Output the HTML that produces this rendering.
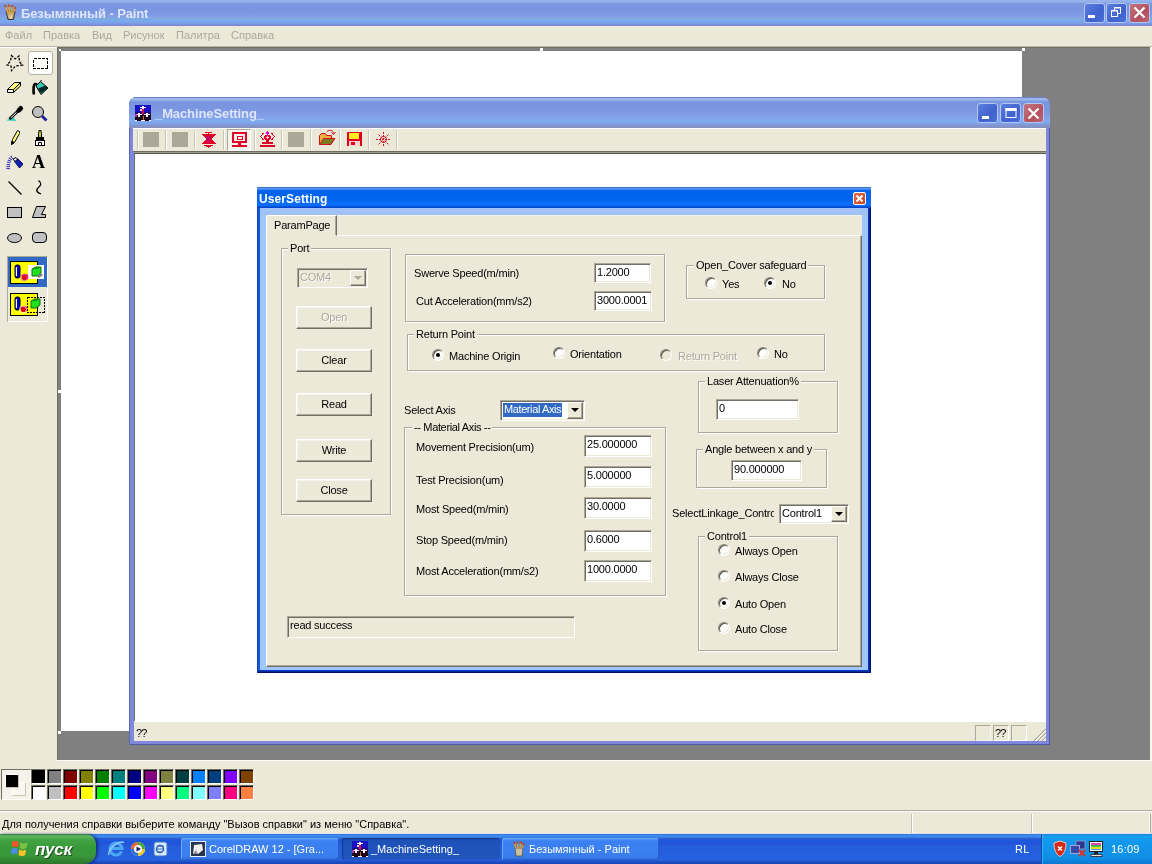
<!DOCTYPE html>
<html><head><meta charset="utf-8"><title>Paint</title>
<style>
*{box-sizing:border-box;margin:0;padding:0}
html,body{width:1152px;height:864px;overflow:hidden;background:#ECE9D8;font-family:"Liberation Sans",sans-serif;font-size:11px;color:#000}
.a{position:absolute}
.t{position:absolute;white-space:nowrap;line-height:13px}
.dl .t,.dl .ed,.dl .bt{letter-spacing:-0.2px}
/* paint window */
#ptitle{left:0;top:0;width:1152px;height:26px;background:linear-gradient(#97B5EC 0,#93B0EB 2px,#7E9CE0 3.5px,#7995DF 6px,#7B97E2 12px,#839FE9 17px,#7FAADC 18.5px,#7AA9F3 21px,#7CA0E6 23px,#7C8ED4 25px,#7A86CB 26px)}
#pmenu{left:0;top:26px;width:1152px;height:20px;background:#ECE9D8}
.mi{position:absolute;top:29px;color:#ACA899;font-size:11px;line-height:13px}
.tb{position:absolute;width:21px;height:20px;border:1px solid #B4C6F2;border-radius:3px;top:3px}
.tbb{background:linear-gradient(135deg,#5E7FDE,#3F62CF 60%,#4A70DA)}
.tbr{background:linear-gradient(135deg,#C27680,#B4525E 60%,#BD6370)}
#gray{left:57px;top:47px;width:1093px;height:713px;background:#808080;border-left:1px solid #6E7062;border-top:1px solid #6E7062}
#canvas{left:61px;top:51px;width:961px;height:680px;background:#fff}

.ed{border:1px solid;border-color:#ACA899 #fff #fff #ACA899;box-shadow:inset 1px 1px 0 #716F64, inset -1px -1px 0 #ECE9D8;overflow:hidden;white-space:nowrap}
.ed span{position:absolute;left:2px;top:2px;line-height:13px}
.ed span.sel{background:#316AC5;color:#fff;left:2px;top:2px;height:14px;padding:0 1px;line-height:13px;letter-spacing:-0.4px}
.cb{position:absolute;right:1px;top:1px;bottom:1px;width:16px;background:#ECE9D8;border:1px solid;border-color:#fff #716F64 #716F64 #fff;box-shadow:inset -1px -1px 0 #ACA899}
.ar{position:absolute;right:5px;top:7px;width:0;height:0;border:4px solid transparent;border-top:4px solid #000;border-bottom:0}
.bt{background:#ECE9D8;border:1px solid;border-color:#fff #716F64 #716F64 #fff;box-shadow:inset -1px -1px 0 #ACA899,inset 1px 1px 0 #F5F4EE;text-align:center}
.bt.dis{color:#ACA899;text-shadow:1px 1px 0 #fff}
.rd{width:12px;height:12px;border-radius:50%;background:#fff;border:1px solid;border-color:#8A8878 #fff #fff #8A8878;box-shadow:inset 1px 1px 0 #55534A,inset -1px -1px 0 #ECE9D8}
.rd.on::after{content:"";position:absolute;left:3px;top:3px;width:4px;height:4px;border-radius:50%;background:#000}
.rdd{background:#ECE9D8}

.pc{width:15px;height:15px;border:1px solid;border-color:#716F64 #fff #fff #716F64;box-shadow:inset 1px 1px 0 #000}
</style></head><body><div id="w" style="position:absolute;left:0;top:0;width:1152px;height:864px;will-change:transform">
<!-- PAINT TITLE -->
<div class="a" id="ptitle"></div>
<div class="t" style="left:21px;top:6px;font:bold 13px/16px 'Liberation Sans',sans-serif;color:#DCE6FA;letter-spacing:-0.12px">Безымянный - Paint</div>
<svg class="a" style="left:3px;top:3px" width="14" height="18" viewBox="0 0 14 18"><path d="M3,8 L12,8 L10.500,16.500 L5,16.500 Z" fill="#C8A860" stroke="#30384C" stroke-width="1"/><path d="M4.500,9 L2,2 M6.500,9 L6,1.500 M8.500,9 L9.500,2 M10.500,9 L12.500,4" stroke="#E0A030" stroke-width="1.700"/><path d="M2,2 l0.700,2.200 M6,1.500 l0.100,2.200 M9.500,2 l-0.300,2.200 M12.500,4 l-0.700,1.800" stroke="#B84820" stroke-width="1.800"/><path d="M6,12 L8,16 M9,11 L8,16" stroke="#F0E0B0" stroke-width="1"/></svg>
<div class="tb tbb" style="left:1084px"></div>
<div class="tb tbb" style="left:1106px"></div>
<div class="tb tbr" style="left:1129px"></div>
<svg class="a" style="left:1084px;top:3px" width="66" height="20" viewBox="1084 3 66 20">
<rect x="1088" y="15" width="7" height="3" fill="#fff"/>
<path d="M1114.500,10 V7.500 H1120.500 V13.500 H1118" fill="none" stroke="#fff" stroke-width="1"/><path d="M1114,7 h7 v1.500 h-7z" fill="#fff"/>
<rect x="1111.500" y="10.500" width="6" height="6" fill="none" stroke="#fff" stroke-width="1"/><path d="M1111,10 h7 v1.500 h-7z" fill="#fff"/>
<path d="M1134.500,7.500 L1144.500,17.500 M1144.500,7.500 L1134.500,17.500" stroke="#fff" stroke-width="2.200"/>
</svg>
<div class="a" style="left:1150px;top:47px;width:2px;height:714px;background:#F8F7F0"></div><div class="a" style="left:57px;top:760px;width:1095px;height:1px;background:#FAF9F4"></div>
<div class="a" id="pmenu"></div>
<span class="mi" style="left:5px">Файл</span>
<span class="mi" style="left:43px">Правка</span>
<span class="mi" style="left:92px">Вид</span>
<span class="mi" style="left:123px">Рисунок</span>
<span class="mi" style="left:176px">Палитра</span>
<span class="mi" style="left:231px">Справка</span>
<div class="a" style="left:0;top:46px;width:1152px;height:1px;background:#BAB7A6"></div><div class="a" style="left:0;top:47px;width:57px;height:1px;background:#fff"></div>
<div class="a" id="gray"></div>
<div class="a" id="canvas"></div>
<div class="a" style="left:59px;top:49px;width:2px;height:2px;background:#fff"></div><div class="a" style="left:540px;top:48px;width:3px;height:3px;background:#fff"></div><div class="a" style="left:1022px;top:48px;width:3px;height:3px;background:#fff"></div><div class="a" style="left:58px;top:390px;width:3px;height:3px;background:#fff"></div><div class="a" style="left:58px;top:731px;width:3px;height:3px;background:#fff"></div>
<!--TOOLBOX-->
<!-- toolbox -->
<div class="a" style="left:28px;top:51px;width:25px;height:24px;background:#FDFDFB;border:1px solid #B4B1A2;border-radius:3px"></div>
<svg class="a" style="left:0;top:47px" width="57" height="280" viewBox="0 47 57 280">
<g fill="none" stroke="#000" stroke-width="1">
<!-- free select star -->
<path d="M11.500,55.500 L15,59 L19,56 L19.500,62 L22.500,65 L15.500,66 L11.500,70.500 L11,66 L7,65 L10.500,61 Z" stroke-dasharray="2.500 1.500" stroke-width="1.300"/>
<!-- rect select -->
<rect x="33.500" y="58.500" width="14" height="10" stroke-dasharray="3 1" stroke-width="1.150" shape-rendering="crispEdges"/>
<!-- eraser -->
<path d="M7.500,89.500 L14.500,82.500 L20.500,82.500 L13.500,89.500 Z" fill="#FFFF80"/>
<path d="M13.500,89.500 L20.500,82.500 L20.500,86 L13.500,92.500 Z" fill="#E0E060"/>
<path d="M7.500,89.500 L13.500,89.500 L13.500,92.500 L7.500,92.500 Z" fill="#F4F4F4"/>
<!-- fill bucket -->
<path d="M40.500,81.500 L48,88 L41,94.500 L36,86 Z" fill="#38C8B8"/>
<path d="M38,88.500 L45.500,85.500 L47.500,88 L42,93 L40,92 Z" fill="#002828" stroke="none"/>
<path d="M37,84.500 C34,82.500 33,86 33.800,94.500" stroke-width="2.600"/>
<path d="M40.500,81.500 L41.500,80"/>
<!-- eyedropper -->
<path d="M6.500,120.500 L16,121 L13.500,117 L10,117.500 Z" fill="#30D0C0" stroke="none"/>
<path d="M9.500,119 L18.500,110.500" stroke-width="2.800"/>
<path d="M10.800,117.800 L16.500,112.400" stroke="#fff" stroke-width="1"/>
<path d="M18.800,110.300 L20.800,108.300" stroke-width="4.600" stroke-linecap="round"/>
<!-- magnifier -->
<circle cx="38" cy="112" r="5.500" fill="#C0C0C0"/>
<path d="M42,116 L46.500,120.500" stroke="#2020A0" stroke-width="3"/>
<!-- pencil -->
<path d="M11.500,144.500 L12.500,139.500 L17.500,130.500 L19.500,131.500 L19.500,133.500 L14.500,142.500 Z" fill="#FFFF80"/>
<path d="M11.500,144.500 L12,141 L14,142.500 Z" fill="#000"/>
<!-- brush -->
<path d="M38.500,137.500 L38.500,133.500 L39,130.500 L41,130.500 L41.500,133.500 L41.500,137.500 Z" fill="#C8C840"/>
<rect x="36.500" y="137.500" width="7" height="2.500" fill="#000"/>
<rect x="35.500" y="140.500" width="9" height="5" fill="#fff"/>
<path d="M38.500,142.500 V145 M41.500,142.500 V145 M38.500,142.500 H41.500"/>
<!-- airbrush -->
<path d="M14.500,161.500 L17.500,158.500 L23,164 L19.500,168 Z" fill="#1020B0" stroke="#101060"/>
<path d="M13,159 L16,157.500 L17.500,159 L15,161.500 Z" fill="#fff"/>
<path d="M8,169 C8.500,162 9.500,158.500 12.500,157" stroke="#3030C0" stroke-width="3.600" stroke-dasharray="1 1"/>
<!-- line -->
<path d="M8.500,181.500 L21.500,194.500" stroke-width="1.300"/>
<!-- curve -->
<path d="M38.500,180.500 C43,184 40,186 38,188 C35,191 38,193 41,194" stroke-width="1.300"/>
<!-- rect -->
<rect x="7.500" y="207.500" width="14" height="10" fill="#C0C0C0"/>
<!-- polygon -->
<path d="M36.500,206.500 L45.500,206.500 L41.500,214.500 L45.500,214.500 L45.500,217.500 L32.500,217.500 Z" fill="#C0C0C0"/>
<!-- ellipse -->
<ellipse cx="14.500" cy="238" rx="7" ry="4.500" fill="#C0C0C0"/>
<!-- rrect -->
<rect x="32.500" y="232.500" width="14" height="10" rx="3.500" fill="#C0C0C0"/>
</g>
<text x="32" y="168" font-family="Liberation Serif,serif" font-weight="bold" font-size="18" fill="#000">A</text>
</svg>
<!-- tool options -->
<div class="a" style="left:7px;top:256px;width:41px;height:66px;border:1px solid;border-color:#ACA899 #fff #fff #ACA899;background:#ECE9D8"></div>
<div class="a" style="left:8px;top:257px;width:39px;height:30px;background:#316AC5"></div>
<svg class="a" style="left:8px;top:257px" width="39" height="64" viewBox="0 0 39 64">
<g shape-rendering="crispEdges">
<rect x="2.500" y="4.500" width="27" height="22" fill="#FFFF00" stroke="#000"/>
<rect x="20" y="8" width="16" height="14" fill="#fff"/>
<rect x="2.500" y="36.500" width="27" height="22" fill="#FFFF00" stroke="#000"/>
<rect x="19.500" y="40.500" width="17" height="15" fill="none" stroke="#000" stroke-dasharray="2 1"/>
</g>
<g>
<rect x="7" y="8" width="5" height="13" rx="2" fill="#0000D0" stroke="#000"/>
<rect x="7.800" y="10" width="1.200" height="9" fill="#fff"/>
<circle cx="17" cy="20" r="3.300" fill="#E00030"/>
<circle cx="16" cy="20.500" r="3.300" fill="none" stroke="#E060C0" stroke-width="0.800"/>
<path d="M24,12 L28,10 L33,10 L33,16 L29,19 L24,19 Z" fill="#20E020" stroke="#107010"/>
<path d="M24,12 L28,10 L33,10 L29,12 Z" fill="#109010"/>
<path d="M29,19 L33,16 L35,18 L31,21 Z" fill="#808080"/>
<rect x="7" y="40" width="5" height="13" rx="2" fill="#0000D0" stroke="#000"/>
<rect x="7.800" y="42" width="1.200" height="9" fill="#fff"/>
<circle cx="16" cy="52" r="3.300" fill="#E00010"/>
<circle cx="15" cy="52.500" r="3.500" fill="none" stroke="#fff" stroke-width="0.800"/>
<path d="M23,44 L27,42 L32,42 L32,48 L28,51 L23,51 Z" fill="#20E020" stroke="#107010"/>
<path d="M23,44 L27,42 L32,42 L28,44 Z" fill="#109010"/>
</g>
</svg>
<!--/TOOLBOX-->
<!--MSWIN-->
<!-- MachineSetting window -->
<div class="a" style="left:129px;top:97px;width:921px;height:648px;background:#8088DC;border-radius:8px 8px 0 0;box-shadow:inset 1px 0 0 #5868A8,inset -1px -1px 0 #5058A8"></div>
<div class="a" style="left:129px;top:97px;width:921px;height:31px;border-radius:8px 8px 0 0;background:linear-gradient(#6C83C8 0,#6C83C8 1px,#9DB7EC 1px,#9AB4EB 3px,#809CE2 4px,#7995DF 6px,#7B97E1 13px,#83A0E8 20px,#7FACF2 24px,#7CA0E6 27px,#8496CC 28.5px,#8290BE 31px)"></div>
<svg class="a" style="left:135px;top:105px" width="16" height="16" viewBox="0 0 16 16" shape-rendering="crispEdges">
<rect width="16" height="9" fill="#1A12C0"/><rect y="9" width="16" height="7" fill="#1C0418"/><rect y="7" width="16" height="3" fill="#2A0860" opacity="0.7"/>
<path d="M5,2h6v1.400h-6z M7,1h2v3.300h-2z M1,9h6v1.400h-6z M3,8h2v3.500h-2z M9,9h6v1.400h-6z M11,8h2v3.500h-2z M0,15h2v1h-2z M6,15h4v1h-4z M14,15h2v1h-2z" fill="#FFF0FF"/>
<path d="M5,4h1.500v2h-1.500z" fill="#F0D8C0"/>
<path d="M7,4.300h1.500v5h-1.500z" fill="#D01058"/><path d="M7.500,11h1.200v3.500h-1.200z" fill="#C06818"/><path d="M0,9h1.500v3h-1.500z" fill="#C040D0" opacity="0.8"/>
</svg>
<div class="t" style="left:155px;top:106px;font:bold 13px/16px 'Liberation Sans',sans-serif;color:#DCE6FA;letter-spacing:-0.1px">_MachineSetting_</div>
<div class="tb tbb" style="left:977px;top:103px"></div>
<div class="tb tbb" style="left:1000px;top:103px"></div>
<div class="tb tbr" style="left:1023px;top:103px"></div>
<svg class="a" style="left:977px;top:103px" width="70" height="21" viewBox="0 0 70 21">
<rect x="5" y="13" width="7" height="3" fill="#fff"/>
<rect x="29" y="5.500" width="10" height="9" fill="none" stroke="#fff" stroke-width="1"/><rect x="28.500" y="5" width="11" height="3" fill="#fff"/>
<path d="M51.500,5.500 L61.500,15.500 M61.500,5.500 L51.500,15.500" stroke="#fff" stroke-width="2.200"/>
</svg>
<!-- toolbar -->
<div class="a" style="left:133px;top:128px;width:913px;height:24px;background:#ECE9D8;border-top:1px solid #fff;border-bottom:1px solid #6E6C60"></div>
<div class="a" style="left:134px;top:152px;width:912px;height:1px;background:#A09D8C"></div>
<div class="a" style="left:134px;top:153px;width:912px;height:568px;background:#fff;border-left:1px solid #687070;border-top:1px solid #55534A"></div>
<div class="a" style="left:227px;top:129px;width:24px;height:22px;background:#F5F4EC;border:1px solid;border-color:#ACA899 #fff #fff #ACA899"></div>
<svg class="a" style="left:134px;top:128px" width="300" height="24" viewBox="134 128 300 24">
<g shape-rendering="crispEdges">
<g fill="#ACA899"><rect x="143" y="132" width="16" height="15"/><rect x="172" y="132" width="16" height="15"/><rect x="288" y="132" width="16" height="15"/></g>
<g stroke="#C9C6B8" stroke-width="1"><path d="M137.500,130 V150 M165.500,130 V150 M194.500,130 V150 M223.500,130 V150 M254.500,130 V150 M281.500,130 V150 M310.500,130 V150 M339.500,130 V150 M368.500,130 V150 M396.500,130 V150"/></g>
<g stroke="#fff" stroke-width="1"><path d="M138.500,130 V150 M166.500,130 V150 M195.500,130 V150 M224.500,130 V150 M255.500,130 V150 M282.500,130 V150 M311.500,130 V150 M340.500,130 V150 M369.500,130 V150 M397.500,130 V150"/></g>
<!-- icon3 bowtie -->
<path d="M201,134 L216,134 L211,139 L216,144 L201,144 L206,139 Z M205,132 h7 v1 h-7z M208,133 h1 v2 h-1z M204,145 h9 v1 h-9z M206,146 h5 v1 h-5z M208,147 h1 v1 h-1z" fill="#E00028"/>
<path d="M207,136 h1 v6 h-1z M209,136 h1 v6 h-1z" fill="#A000A0"/>
<!-- icon4 monitor -->
<path d="M232,132 h15 v11 h-15z M234,134 v7 h11 v-7z" fill="#E00028" fill-rule="evenodd"/>
<path d="M234,134 h11 v7 h-11z" fill="#FBEFF0"/>
<path d="M237,136 h6 v4 h-6z M238,137 v2 h4 v-2z" fill="#E00028" fill-rule="evenodd"/>
<path d="M238,143 h3 v2 h-3z M232,145 h15 v2 h-15z" fill="#E00028"/>
<!-- icon5 -->
<path d="M265,135 h5 v5 h-5z M264,136 h7 v3 h-7z M266,140 h3 v3 h-3z M262,142 h11 v2 h-11z M260,145 h15 v2 h-15z" fill="#E00028"/>
<path d="M267,131 h1 v1 h-1z M266,132 h3 v2 h-3z M267,134 h1 v2 h-1z" fill="#D000D0"/>
<path d="M266,137 h3 v1 h-3z M267,136 h1 v3 h-1z" fill="#FBD0E0"/>
<path d="M263.500,133 L260.500,136.500 L263.500,140 M271.500,133 L274.500,136.500 L271.500,140" fill="none" stroke="#E00028"/>
</g>
<!-- open folder -->
<path d="M319.500,144.500 L319.500,135.500 L321.500,133.500 L325.500,133.500 L326.500,135.500 L331.500,135.500 L331.500,138.500" fill="#F0B040" stroke="#D01020"/>
<path d="M319.500,144.500 L323.500,138.500 L335,138.500 L331,144.500 Z" fill="#7A7A20" stroke="#D01020"/>
<path d="M327,131.500 C330,129.500 333,130 333.500,133.500 M331.500,132.500 L333.500,134.500 L335.500,132" fill="none" stroke="#D01020"/>
<!-- floppy -->
<g shape-rendering="crispEdges">
<rect x="347" y="132" width="15" height="14" fill="#E00020"/>
<rect x="349" y="133" width="10" height="6" fill="#FFEE20"/>
<rect x="349" y="141" width="11" height="5" fill="#F4D8D0"/>
<rect x="351" y="142" width="4" height="3" fill="#E00020"/>
</g>
<!-- starburst -->
<g stroke="#D01020" stroke-width="1" fill="none">
<path d="M383.500,132 V147 M376,139.500 H391 M378.500,134.500 L388.500,144.500 M388.500,134.500 L378.500,144.500" stroke-dasharray="2 1"/>
<circle cx="383.500" cy="139.500" r="3"/>
</g>
</svg>
<!-- ms status bar -->
<div class="a" style="left:134px;top:721px;width:912px;height:20px;background:#ECE9D8;border-top:1px solid #fff"></div>
<div class="t" style="left:136px;top:727px;font-size:11px;letter-spacing:-0.8px">??</div>
<div class="a" style="left:975px;top:725px;width:16px;height:16px;border:1px solid;border-color:#ACA899 #F6F5EE #F6F5EE #ACA899"></div>
<div class="a" style="left:993px;top:725px;width:16px;height:16px;border:1px solid;border-color:#ACA899 #fff #fff #ACA899"></div>
<div class="a" style="left:1011px;top:725px;width:16px;height:16px;border:1px solid;border-color:#ACA899 #fff #fff #ACA899"></div>
<div class="t" style="left:995px;top:727px;font-size:11px;letter-spacing:-0.8px">??</div>
<svg class="a" style="left:1033px;top:728px" width="13" height="13" viewBox="0 0 13 13"><path d="M1,13 L13,1 M5,13 L13,5 M9,13 L13,9" stroke="#ACA899" stroke-width="1.300"/><path d="M2,13 L13,2 M6,13 L13,6 M10,13 L13,10" stroke="#fff" stroke-width="0.800"/></svg>
<!--/MSWIN-->
<!--DIALOG-->
<!-- UserSetting dialog -->
<div class="dl">
<div class="a" style="left:257px;top:187px;width:614px;height:486px;background:#0A3CC0;box-shadow:inset 1px 0 0 #1038A8,inset -1px -1px 0 #001068,inset -2px -2px 0 #0428A0"></div>
<div class="a" style="left:257px;top:187px;width:614px;height:21px;background:linear-gradient(#3A6CC8 0,#3A6CC8 1px,#5A9AF8 1px,#5A9AF8 2px,#1068F0 3px,#0062EC 5px,#0065EE 13px,#0A6CF8 16px,#0A6CF8 18.5px,#0055DC 19.5px,#003FC4 21px)"></div>
<div class="a" style="left:260px;top:208px;width:608px;height:462px;background:linear-gradient(#A2C4FB 0,#9FC2F5 5px,#A6C2E6 7px,#A0C7FB 8px)"></div>
<div class="a" style="left:258px;top:208px;width:2px;height:462px;background:linear-gradient(90deg,#1C62E0 50%,#0A58D0 50%)"></div>
<div class="a" style="left:868px;top:208px;width:1px;height:462px;background:#0A30B0"></div>
<div class="t" style="left:259px;top:192px;font:bold 12px/14px 'Liberation Sans',sans-serif;color:#fff;letter-spacing:0.1px">UserSetting</div>
<div class="a" style="left:853px;top:192px;width:13px;height:13px;background:linear-gradient(135deg,#E0704E,#C8401E);border:1px solid #fff;border-radius:2px"></div>
<svg class="a" style="left:853px;top:192px" width="13" height="13" viewBox="0 0 13 13"><path d="M3.500,3.500 L9.500,9.500 M9.500,3.500 L3.500,9.500" stroke="#fff" stroke-width="2"/></svg>
<div class="a" style="left:266px;top:235px;width:596px;height:432px;background:#ECE9D8;border:1px solid;border-color:#fff #716F64 #716F64 #fff;box-shadow:inset -1px -1px 0 #ACA899"></div>
<div class="a" style="left:266px;top:215px;width:71px;height:21px;background:#ECE9D8;border:1px solid;border-color:#fff #716F64 #ECE9D8 #fff;border-radius:2px 2px 0 0;box-shadow:inset -1px 0 0 #ACA899"></div>
<div class="a" style="left:337px;top:215px;width:525px;height:20px;background:#ECE9D8"></div>
<div class="a tabtopline" style="left:337px;top:215px;width:525px;height:1px;background:#EEF3F1"></div>
<div class="t" style="left:274px;top:219px">ParamPage</div>
<div class="a" style="left:281px;top:248px;width:110px;height:267px;border:1px solid #ACA899;box-shadow:1px 1px 0 #fff, inset 1px 1px 0 #fff"></div>
<div class="t" style="left:288px;top:242px;background:#ECE9D8;padding:0 2px;">Port</div>
<div class="a ed" style="left:297px;top:268px;width:71px;height:20px;background:#ECE9D8"><span class="" style="color:#ACA899;text-shadow:1px 1px 0 #fff">COM4</span><i class="cb"></i><b class="ar" style="border-top-color:#ACA899"></b></div>
<div class="a bt dis" style="left:296px;top:306px;width:76px;height:23px;line-height:21px">Open</div>
<div class="a bt" style="left:296px;top:349px;width:76px;height:23px;line-height:21px">Clear</div>
<div class="a bt" style="left:296px;top:393px;width:76px;height:23px;line-height:21px">Read</div>
<div class="a bt" style="left:296px;top:439px;width:76px;height:23px;line-height:21px">Write</div>
<div class="a bt" style="left:296px;top:479px;width:76px;height:23px;line-height:21px">Close</div>
<div class="a" style="left:405px;top:254px;width:260px;height:68px;border:1px solid #ACA899;box-shadow:1px 1px 0 #fff, inset 1px 1px 0 #fff"></div>
<div class="t" style="left:414px;top:267px;">Swerve Speed(m/min)</div>
<div class="t" style="left:416px;top:295px;">Cut Acceleration(mm/s2)</div>
<div class="a ed" style="left:594px;top:263px;width:57px;height:20px;background:#fff"><span>1.2000</span></div>
<div class="a ed" style="left:594px;top:291px;width:58px;height:20px;background:#fff"><span>3000.0001</span></div>
<div class="a" style="left:686px;top:265px;width:139px;height:34px;border:1px solid #ACA899;box-shadow:1px 1px 0 #fff, inset 1px 1px 0 #fff"></div>
<div class="t" style="left:694px;top:259px;background:#ECE9D8;padding:0 2px;">Open_Cover safeguard</div>
<div class="a rd" style="left:705px;top:277px"></div>
<div class="t" style="left:722px;top:278px;">Yes</div>
<div class="a rd on" style="left:764px;top:277px"></div>
<div class="t" style="left:782px;top:278px;">No</div>
<div class="a" style="left:407px;top:334px;width:418px;height:37px;border:1px solid #ACA899;box-shadow:1px 1px 0 #fff, inset 1px 1px 0 #fff"></div>
<div class="t" style="left:414px;top:328px;background:#ECE9D8;padding:0 2px;">Return Point</div>
<div class="a rd on" style="left:432px;top:349px"></div>
<div class="t" style="left:449px;top:350px;">Machine Origin</div>
<div class="a rd" style="left:553px;top:347px"></div>
<div class="t" style="left:570px;top:348px;">Orientation</div>
<div class="a rd rdd" style="left:660px;top:349px"></div>
<div class="t" style="left:678px;top:350px;color:#ACA899;text-shadow:1px 1px 0 #fff;">Return Point</div>
<div class="a rd" style="left:757px;top:347px"></div>
<div class="t" style="left:774px;top:348px;">No</div>
<div class="a" style="left:698px;top:381px;width:140px;height:52px;border:1px solid #ACA899;box-shadow:1px 1px 0 #fff, inset 1px 1px 0 #fff"></div>
<div class="t" style="left:705px;top:375px;background:#ECE9D8;padding:0 2px;">Laser Attenuation%</div>
<div class="a ed" style="left:716px;top:399px;width:83px;height:21px;background:#fff"><span>0</span></div>
<div class="t" style="left:404px;top:404px;">Select Axis</div>
<div class="a ed" style="left:500px;top:400px;width:85px;height:21px;background:#fff"><span class="sel" style="">Material Axis</span><i class="cb"></i><b class="ar" style=""></b></div>
<div class="a" style="left:404px;top:427px;width:262px;height:169px;border:1px solid #ACA899;box-shadow:1px 1px 0 #fff, inset 1px 1px 0 #fff"></div>
<div class="t" style="left:412px;top:421px;background:#ECE9D8;padding:0 2px;letter-spacing:-0.35px;">-- Material Axis --</div>
<div class="t" style="left:416px;top:441px;">Movement Precision(um)</div>
<div class="t" style="left:416px;top:474px;">Test Precision(um)</div>
<div class="t" style="left:416px;top:503px;">Most Speed(m/min)</div>
<div class="t" style="left:416px;top:534px;">Stop Speed(m/min)</div>
<div class="t" style="left:416px;top:565px;">Most Acceleration(mm/s2)</div>
<div class="a ed" style="left:584px;top:435px;width:68px;height:22px;background:#fff"><span>25.000000</span></div>
<div class="a ed" style="left:584px;top:466px;width:68px;height:22px;background:#fff"><span>5.000000</span></div>
<div class="a ed" style="left:584px;top:497px;width:68px;height:22px;background:#fff"><span>30.0000</span></div>
<div class="a ed" style="left:584px;top:530px;width:68px;height:22px;background:#fff"><span>0.6000</span></div>
<div class="a ed" style="left:584px;top:560px;width:68px;height:22px;background:#fff"><span>1000.0000</span></div>
<div class="a" style="left:696px;top:449px;width:131px;height:39px;border:1px solid #ACA899;box-shadow:1px 1px 0 #fff, inset 1px 1px 0 #fff"></div>
<div class="t" style="left:703px;top:443px;background:#ECE9D8;padding:0 2px;">Angle between x and y</div>
<div class="a ed" style="left:731px;top:460px;width:71px;height:21px;background:#fff"><span>90.000000</span></div>
<div class="t" style="left:672px;top:507px;width:102px;overflow:hidden">SelectLinkage_Control</div>
<div class="a ed" style="left:779px;top:504px;width:70px;height:20px;background:#fff"><span class="" style="">Control1</span><i class="cb"></i><b class="ar" style=""></b></div>
<div class="a" style="left:698px;top:536px;width:140px;height:115px;border:1px solid #ACA899;box-shadow:1px 1px 0 #fff, inset 1px 1px 0 #fff"></div>
<div class="t" style="left:705px;top:530px;background:#ECE9D8;padding:0 2px;">Control1</div>
<div class="a rd" style="left:718px;top:544px"></div>
<div class="t" style="left:735px;top:545px;">Always Open</div>
<div class="a rd" style="left:718px;top:570px"></div>
<div class="t" style="left:735px;top:571px;">Always Close</div>
<div class="a rd on" style="left:718px;top:597px"></div>
<div class="t" style="left:735px;top:598px;">Auto Open</div>
<div class="a rd" style="left:718px;top:622px"></div>
<div class="t" style="left:735px;top:623px;">Auto Close</div>
<div class="a ed" style="left:287px;top:616px;width:288px;height:22px;background:#ECE9D8"><span>read success</span></div>
</div>
<!--/DIALOG-->
<!--BOTTOM-->
<!-- palette -->
<div class="a" style="left:1px;top:769px;width:30px;height:31px;border:1px solid;border-color:#716F64 #fff #fff #716F64;background:#F4F3EA"></div>
<div class="a" style="left:12px;top:782px;width:14px;height:14px;background:#F8F7F0;border:1px solid;border-color:#fff #C8C5B8 #C8C5B8 #fff"></div>
<div class="a" style="left:5px;top:774px;width:14px;height:14px;background:#000;border:1px solid;border-color:#fff #C8C5B8 #C8C5B8 #fff"></div>
<div class="a pc" style="left:31px;top:769px;background:#000000"></div>
<div class="a pc" style="left:47px;top:769px;background:#808080"></div>
<div class="a pc" style="left:63px;top:769px;background:#800000"></div>
<div class="a pc" style="left:79px;top:769px;background:#808000"></div>
<div class="a pc" style="left:95px;top:769px;background:#008000"></div>
<div class="a pc" style="left:111px;top:769px;background:#008080"></div>
<div class="a pc" style="left:127px;top:769px;background:#000080"></div>
<div class="a pc" style="left:143px;top:769px;background:#800080"></div>
<div class="a pc" style="left:159px;top:769px;background:#808040"></div>
<div class="a pc" style="left:175px;top:769px;background:#004040"></div>
<div class="a pc" style="left:191px;top:769px;background:#0080FF"></div>
<div class="a pc" style="left:207px;top:769px;background:#004080"></div>
<div class="a pc" style="left:223px;top:769px;background:#8000FF"></div>
<div class="a pc" style="left:239px;top:769px;background:#804000"></div>
<div class="a pc" style="left:31px;top:785px;background:#FFFFFF"></div>
<div class="a pc" style="left:47px;top:785px;background:#C0C0C0"></div>
<div class="a pc" style="left:63px;top:785px;background:#FF0000"></div>
<div class="a pc" style="left:79px;top:785px;background:#FFFF00"></div>
<div class="a pc" style="left:95px;top:785px;background:#00FF00"></div>
<div class="a pc" style="left:111px;top:785px;background:#00FFFF"></div>
<div class="a pc" style="left:127px;top:785px;background:#0000FF"></div>
<div class="a pc" style="left:143px;top:785px;background:#FF00FF"></div>
<div class="a pc" style="left:159px;top:785px;background:#FFFF80"></div>
<div class="a pc" style="left:175px;top:785px;background:#00FF80"></div>
<div class="a pc" style="left:191px;top:785px;background:#80FFFF"></div>
<div class="a pc" style="left:207px;top:785px;background:#8080FF"></div>
<div class="a pc" style="left:223px;top:785px;background:#FF0080"></div>
<div class="a pc" style="left:239px;top:785px;background:#FF8040"></div>
<div class="a" style="left:0;top:810px;width:1152px;height:1px;background:#ACA899"></div>
<div class="a" style="left:0;top:811px;width:1152px;height:1px;background:#fff"></div>
<div class="t" style="left:2px;top:818px;font-size:11px;letter-spacing:0px">Для получения справки выберите команду "Вызов справки" из меню "Справка".</div>
<div class="a" style="left:911px;top:814px;width:2px;height:19px;border-left:1px solid #C5C2B8;border-right:1px solid #fff"></div>
<div class="a" style="left:1031px;top:814px;width:2px;height:19px;border-left:1px solid #C5C2B8;border-right:1px solid #fff"></div>
<div class="a" style="left:1149px;top:814px;width:2px;height:19px;border-left:1px solid #fff;border-right:1px solid #ACA899"></div>
<div class="a" style="left:0;top:833px;width:1152px;height:31px;background:linear-gradient(#E4E0EC 0,#E4E0EC 1px,#2A60C0 1px,#3C8CF0 2px,#3A88EC 4px,#3070D8 5px,#2456D0 6px,#1C5ADC 7.5px,#2452DC 10px,#245CDC 13px,#2560DE 24px,#2862E0 27px,#1E50C8 28.5px,#1844B8 31px)"></div>
<div class="a" style="left:0;top:834px;width:96px;height:30px;border-radius:0 10px 12px 0;background:linear-gradient(#2F7A35 0,#62B862 2px,#44A244 6px,#379A37 14px,#3A963A 22px,#2B762B 30px);box-shadow:2px 0 3px rgba(0,0,40,.5)"></div>
<svg class="a" style="left:11px;top:839px" width="18" height="18" viewBox="0 0 18 18"><path d="M1,3 C3,1.500 6,1.500 8,3 L7,8.500 C5,7.200 3,7.200 1,8.500 Z" fill="#E8582C"/><path d="M9.500,3.500 C11.500,5 14,5 16.500,3.500 L15.500,9 C13,10.500 10.500,10.500 8.500,9 Z" fill="#7CC242"/><path d="M0.500,10 C2.500,8.500 5,8.500 7,10 L6,15.500 C4,14.200 2,14.200 0,15.500 Z" fill="#4A8CE8"/><path d="M8.200,10.500 C10.500,12 13,12 15.200,10.500 L14.200,16 C12,17.500 9.500,17.500 7.500,16 Z" fill="#F8C428"/></svg>
<div class="t" style="left:35px;top:839px;font:italic bold 17px/22px 'Liberation Sans',sans-serif;color:#fff;text-shadow:1px 1px 1px #1A4A1A;letter-spacing:-0.3px">пуск</div>
<svg class="a" style="left:107px;top:840px" width="64" height="18" viewBox="107 840 64 18"><path d="M121.500,851.500 A6,6 0 1 1 122,848.500 L111,848.500" fill="none" stroke="#48A8F4" stroke-width="3"/><path d="M108.500,855 C109,848 118,840.500 124,842.500" fill="none" stroke="#8CCBFA" stroke-width="1.500"/><circle cx="138" cy="849" r="7" fill="#E8E8F0"/><path d="M138,842 A7,7 0 0 1 145,849 L138,849 Z" fill="#48A838"/><path d="M138,856 A7,7 0 0 1 131,849 L138,849 Z" fill="#3070D0"/><path d="M131,849 A7,7 0 0 1 138,842 L138,849Z" fill="#E86428"/><path d="M145,849 A7,7 0 0 1 138,856 L138,849Z" fill="#E8C828"/><circle cx="138" cy="849" r="4" fill="#F8F8FF"/><path d="M136.500,846.500 L141,849 L136.500,851.500 Z" fill="#202060"/><rect x="154" y="842" width="13" height="14" rx="2" fill="#D8E8F8" stroke="#3C78C8"/><path d="M157,846 h7 M157,849 h7 M157,852 h4" stroke="#3C78C8" stroke-width="1.200"/><circle cx="160" cy="849" r="3.500" fill="none" stroke="#2A62B8" stroke-width="1.500"/></svg>
<div class="a" style="left:181px;top:838px;width:158px;height:22px;border-radius:3px;background:linear-gradient(#5C9CF8 0,#3C81F3 3px,#3A7EEE 18px,#326EDC 22px);box-shadow:inset 1px 1px 0 #6BA6FA, inset -1px -1px 0 #2A5EC8"></div>
<svg class="a" style="left:190px;top:841px" width="16" height="16" viewBox="0 0 16 16"><rect x="0.500" y="0.500" width="15" height="15" fill="#2A3450" stroke="#E8F0FF"/><path d="M3,13 L4,4 L12,3 L13,9 L8,13 Z" fill="#F0F0F0"/><path d="M3,13 L6,9 L8,13Z" fill="#909090"/></svg>
<div class="t" style="left:209px;top:843px;color:#fff;font-size:11px;letter-spacing:0px">CorelDRAW 12 - [Gra...</div>
<div class="a" style="left:342px;top:838px;width:158px;height:22px;border-radius:3px;background:linear-gradient(#1A49A8 0,#1E52B7 3px,#2055BC 20px,#2459C4 22px);box-shadow:inset 1px 1px 1px #153A8C"></div>
<svg class="a" style="left:352px;top:841px" width="16" height="16" viewBox="0 0 16 16" shape-rendering="crispEdges"><rect width="16" height="9" fill="#1A12C0"/><rect y="9" width="16" height="7" fill="#1C0418"/><rect y="7" width="16" height="3" fill="#2A0860" opacity="0.7"/><path d="M5,2h6v1.400h-6z M7,1h2v3.300h-2z M1,9h6v1.400h-6z M3,8h2v3.500h-2z M9,9h6v1.400h-6z M11,8h2v3.500h-2z M0,15h2v1h-2z M6,15h4v1h-4z M14,15h2v1h-2z" fill="#FFF0FF"/><path d="M5,4h1.500v2h-1.500z" fill="#F0D8C0"/><path d="M7,4.300h1.500v5h-1.500z" fill="#D01058"/><path d="M7.500,11h1.200v3.500h-1.200z" fill="#C06818"/><path d="M0,9h1.500v3h-1.500z" fill="#C040D0" opacity="0.8"/></svg>
<div class="t" style="left:371px;top:843px;color:#fff;font-size:11px;letter-spacing:0px">_MachineSetting_</div>
<div class="a" style="left:502px;top:838px;width:157px;height:22px;border-radius:3px;background:linear-gradient(#5C9CF8 0,#3C81F3 3px,#3A7EEE 18px,#326EDC 22px);box-shadow:inset 1px 1px 0 #6BA6FA, inset -1px -1px 0 #2A5EC8"></div>
<svg class="a" style="left:511px;top:841px" width="16" height="16" viewBox="0 0 16 16"><path d="M4,7 L12,7 L11,15 L5,15 Z" fill="#C8C0A0" stroke="#605840" stroke-width="0.800"/><path d="M5,7 L3,1 M7,7 L6.500,0.500 M9,7 L10,0.500 M11,7 L13,2" stroke="#D8A030" stroke-width="1.600"/><path d="M3,1 l0.500,2 M6.500,0.500 l0.200,2 M10,0.500 l-0.300,2 M13,2 l-0.600,2" stroke="#C03020" stroke-width="1.600"/></svg>
<div class="t" style="left:529px;top:843px;color:#fff;font-size:11px;letter-spacing:0px">Безымянный - Paint</div>
<div class="a" style="left:1041px;top:834px;width:111px;height:30px;background:linear-gradient(#1A80D8 0,#19A0F0 2px,#129AEE 5px,#0F8EE6 24px,#0C78D0 30px);border-left:1px solid #0A4EA8;box-shadow:inset 1px 0 0 #28B0F8"></div>
<div class="t" style="left:1015px;top:843px;color:#fff;font-size:11px;letter-spacing:0.3px">RL</div>
<div class="t" style="left:1111px;top:843px;color:#fff;font-size:11px;letter-spacing:0.2px">16:09</div>
<svg class="a" style="left:1052px;top:840px" width="54" height="18" viewBox="1052 840 54 18"><path d="M1060,841 L1066,843 C1066,850 1064,854 1060,856.500 C1056,854 1054,850 1054,843 Z" fill="#D82818" stroke="#F0C8C0" stroke-width="1"/><path d="M1058,846.500 L1062,850.500 M1062,846.500 L1058,850.500" stroke="#fff" stroke-width="1.500"/><rect x="1076" y="841" width="9" height="8" fill="#283890" stroke="#8890C0"/><rect x="1070.500" y="845.500" width="9" height="8" fill="#3848A8" stroke="#A0A8D8"/><path d="M1079,850 L1085,856 M1085,850 L1079,856" stroke="#E03020" stroke-width="1.800"/><rect x="1089.500" y="841.500" width="13" height="10" fill="#fff" stroke="#202020"/><rect x="1091" y="843" width="10" height="7" fill="#40A0E0"/><path d="M1091,843 h10 v2 h-10z" fill="#E040C0"/><path d="M1091,845 h10 v2 h-10z" fill="#40C040"/><path d="M1091,847 h10 v2 h-10z" fill="#E8E020"/><path d="M1094,852 h4 v2 h-4z" fill="#202020"/><path d="M1091,854.500 h11 v2 h-11z" fill="#E8E8E0" stroke="#202020" stroke-width="0.800"/></svg>
<!--/BOTTOM-->
</div></body></html>
